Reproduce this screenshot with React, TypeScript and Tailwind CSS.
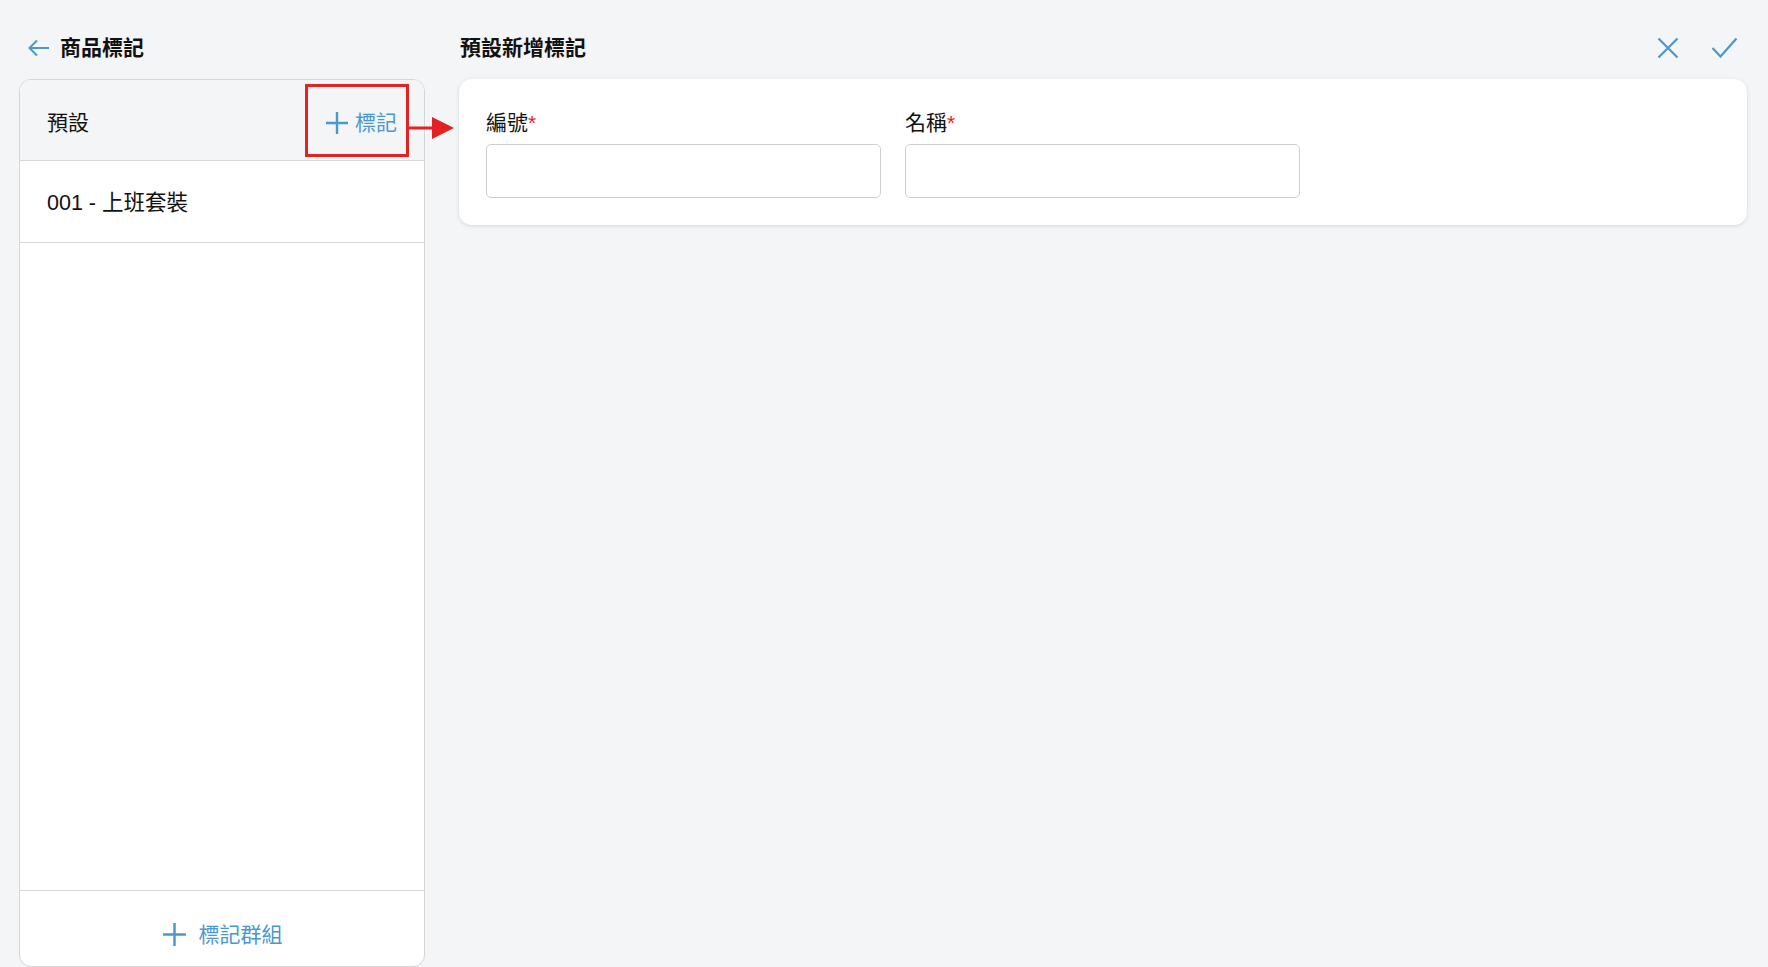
import React from "react";

const font = { fontFamily: '"Liberation Sans", "Noto Sans CJK TC", sans-serif' };

function PlusIcon({ size = 24 }: { size?: number }) {
  return (
    <svg width={size} height={size} viewBox="0 0 24 24" fill="none" stroke="#4a98cc" strokeWidth={2.4}>
      <path d="M12 1v22M1 12h22" />
    </svg>
  );
}

export default function App() {
  return (
    <div className="relative flex h-[967px] w-full overflow-hidden bg-[#f4f5f7] text-[#111]" style={font}>
      {/* left column: tag groups */}
      <div className="flex w-[406px] shrink-0 flex-col pl-[19px] box-content">
        <div className="flex h-[79px] items-center gap-[10px] pl-[9px] pt-[16px]">
          <svg width="22" height="18" viewBox="0 0 22 18" fill="none" stroke="#4a98cc" strokeWidth={2}>
            <path d="M21 9H2M9 1.5L1.5 9 9 16.5" />
          </svg>
          <span className="text-[21px] font-bold leading-none">商品標記</span>
        </div>
        <div className="flex flex-1 flex-col overflow-hidden rounded-[12px] border border-[#d6d6d6] bg-white">
          <div className="flex h-[81px] items-center justify-between border-b border-[#d6d6d6] bg-[#f4f5f7] pl-[27px] pr-[27px] pt-[5px]">
            <span className="text-[21px]">預設</span>
            <button className="flex items-center gap-[6px] text-[21px] text-[#4a98cc]">
              <PlusIcon />
              <span>標記</span>
            </button>
          </div>
          <div className="flex h-[82px] items-center border-b border-[#d6d6d6] pl-[27px] pt-[4px] text-[21.5px]">
            001 - 上班套裝
          </div>
          <div className="flex-1" />
          <div className="flex h-[76px] items-center justify-center gap-[12px] border-t border-[#d6d6d6] pt-[12px] text-[21px] text-[#4a98cc]">
            <PlusIcon size={25} />
            <span>標記群組</span>
          </div>
        </div>
      </div>

      {/* right column: new tag form */}
      <div className="flex flex-1 flex-col pl-[34px] pr-[21px]">
        <div className="flex h-[79px] items-center justify-between pt-[16px]">
          <span className="pl-[1px] text-[21px] font-bold leading-none">預設新增標記</span>
          <div className="flex items-center gap-[32px] pr-[9px]">
            <svg width="22" height="22" viewBox="0 0 22 22" fill="none" stroke="#4a98cc" strokeWidth={2.2}>
              <path d="M1.5 1.5l19 19M20.5 1.5l-19 19" />
            </svg>
            <svg width="27" height="21" viewBox="0 0 27 21" fill="none" stroke="#4a98cc" strokeWidth={2.2}>
              <path d="M1.5 11l8 8.5L25.5 1.5" />
            </svg>
          </div>
        </div>
        <div className="flex h-[146px] gap-[24px] rounded-[13px] bg-white px-[27px] pt-[32px] shadow-[0_1px_4px_rgba(0,0,0,0.12)]">
          <label className="flex w-[395px] flex-col gap-[9px]">
            <span className="text-[21px] leading-[24px]">
              編號<span className="text-[#ee1c1c]">*</span>
            </span>
            <input className="h-[54px] rounded-[5px] border border-[#cfcfcf] bg-white outline-none" />
          </label>
          <label className="flex w-[395px] flex-col gap-[9px]">
            <span className="text-[21px] leading-[24px]">
              名稱<span className="text-[#ee1c1c]">*</span>
            </span>
            <input className="h-[54px] rounded-[5px] border border-[#cfcfcf] bg-white outline-none" />
          </label>
        </div>
      </div>

      {/* highlight box and pointer arrow over the add-tag button */}
      <div className="pointer-events-none absolute left-[305px] top-[84px] h-[73px] w-[104px] border-[3px] border-[#e42222]" />
      <svg className="pointer-events-none absolute left-[406px] top-[116px]" width="50" height="24" viewBox="0 0 50 24">
        <path d="M0 12h28" stroke="#e42222" strokeWidth={3} />
        <path d="M26 1L48 12L26 23Z" fill="#e42222" />
      </svg>
    </div>
  );
}
